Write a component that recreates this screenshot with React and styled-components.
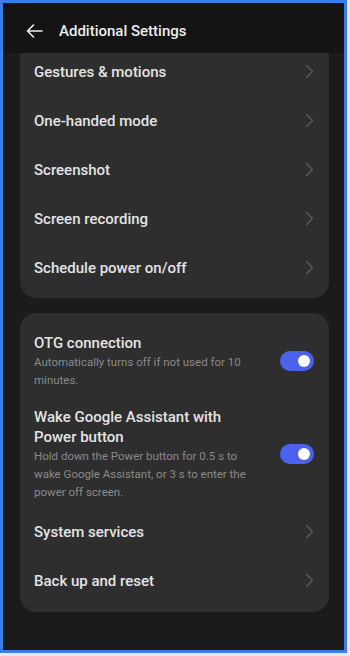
import React from "react";
import styled, { createGlobalStyle } from "styled-components";

const Global = createGlobalStyle`
  html, body { margin: 0; padding: 0; background: #e4e9f1; }
  body { font-family: Roboto, "Noto Sans", "Liberation Sans", sans-serif; -webkit-font-smoothing: antialiased; }
`;

const Frame = styled.div`
  box-sizing: content-box;
  width: 341px;
  height: 647px;
  border: 3px solid #3c7ee0;
  background: #1b1b1b;
  display: flex;
  flex-direction: column;
  overflow: hidden;
`;

const Header = styled.header`
  height: 50px;
  box-sizing: border-box;
  flex: none;
  background: #141414;
  display: flex;
  align-items: center;
  padding: 6px 0 0 22px;
  gap: 16px;
  position: relative;
  z-index: 1;
`;

const BackButton = styled.button`
  all: unset;
  width: 18px;
  height: 20px;
  display: flex;
  align-items: center;
  justify-content: center;
`;

const Title = styled.h1`
  margin: 0;
  font-size: 15px;
  font-weight: 500;
  color: #ededed;
  letter-spacing: 0;
`;

const Scroller = styled.main`
  flex: 1;
  overflow: hidden;
  padding: 0 15px 0 17px;
`;

const Card = styled.section`
  background: #2e2e2e;
  border-radius: 16px;
  padding: ${(p) => p.$padTop}px 0 ${(p) => p.$padBottom}px;
  margin-top: ${(p) => p.$mt}px;
  display: flex;
  flex-direction: column;
`;

const NavRow = styled.div`
  height: 49px;
  display: flex;
  align-items: center;
  justify-content: space-between;
  padding: 0 15px 0 14px;
`;

const RowTitle = styled.div`
  font-size: 15px;
  font-weight: 500;
  color: #e3e3e3;
  line-height: 20px;
`;

const ToggleRow = styled.div`
  display: flex;
  align-items: center;
  justify-content: space-between;
  padding: 12px 15px 6px 14px;
  gap: 16px;
`;

const TextCol = styled.div`
  display: flex;
  flex-direction: column;
  max-width: 216px;
`;

const Desc = styled.div`
  font-size: 11.5px;
  line-height: 18px;
  color: #8a8a8a;
`;

const Switch = styled.div`
  flex: none;
  width: 34px;
  height: 20px;
  border-radius: 10px;
  background: #4a62ee;
  display: flex;
  align-items: center;
  justify-content: flex-end;
  padding-right: 4px;
  box-sizing: border-box;
`;

const Knob = styled.div`
  width: 12px;
  height: 12px;
  border-radius: 50%;
  background: #ffffff;
`;

const Chevron = () => (
  <svg width="9" height="15" viewBox="0 0 9 15" fill="none">
    <path d="M1.5 1.5 L7.5 7.5 L1.5 13.5" stroke="#5c5c5c" strokeWidth="1.4" strokeLinecap="round" strokeLinejoin="round" />
  </svg>
);

const BackArrow = () => (
  <svg width="17" height="14" viewBox="0 0 17 14" fill="none">
    <path d="M16 7 H1.5 M7.5 1 L1.5 7 L7.5 13" stroke="#ededed" strokeWidth="1.6" strokeLinecap="round" strokeLinejoin="round" />
  </svg>
);

const Nav = ({ label }) => (
  <NavRow>
    <RowTitle>{label}</RowTitle>
    <Chevron />
  </NavRow>
);

const Toggle = ({ title, desc }) => (
  <ToggleRow>
    <TextCol>
      <RowTitle>{title}</RowTitle>
      <Desc>{desc}</Desc>
    </TextCol>
    <Switch>
      <Knob />
    </Switch>
  </ToggleRow>
);

export default function App() {
  return (
    <>
      <Global />
      <Frame>
        <Header>
          <BackButton aria-label="Back">
            <BackArrow />
          </BackButton>
          <Title>Additional Settings</Title>
        </Header>
        <Scroller>
          <Card $padTop={6} $padBottom={6} $mt={-12}>
            <Nav label="Gestures & motions" />
            <Nav label="One-handed mode" />
            <Nav label="Screenshot" />
            <Nav label="Screen recording" />
            <Nav label="Schedule power on/off" />
          </Card>
          <Card $padTop={8} $padBottom={7} $mt={15}>
            <Toggle
              title="OTG connection"
              desc="Automatically turns off if not used for 10 minutes."
            />
            <Toggle
              title="Wake Google Assistant with Power button"
              desc="Hold down the Power button for 0.5 s to wake Google Assistant, or 3 s to enter the power off screen."
            />
            <Nav label="System services" />
            <Nav label="Back up and reset" />
          </Card>
        </Scroller>
      </Frame>
    </>
  );
}
